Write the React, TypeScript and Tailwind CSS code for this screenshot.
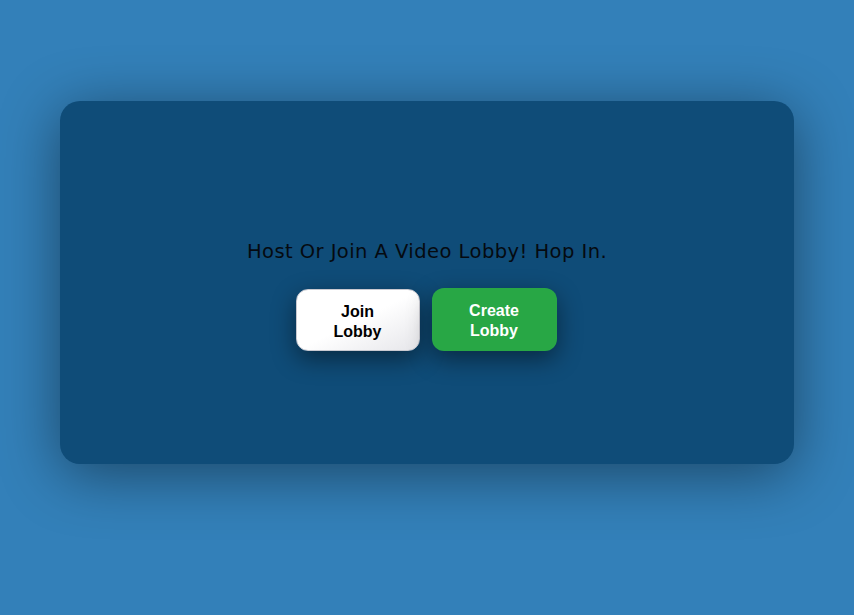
const App = () => {
  return (
    <div className="min-h-screen w-full bg-[#3380b9] pt-[101px] font-['Liberation_Sans',Arial,sans-serif]">
      <div className="mx-auto w-[734px] h-[363px] rounded-[20px] bg-[#0f4c78] shadow-[0_10px_60px_rgba(0,0,0,0.45)] flex flex-col items-center pt-[139px]">
        <h1 className="text-[19.5px] leading-6 text-[#050a10] tracking-[0.45px] font-['DejaVu_Sans',sans-serif]">
          Host Or Join A Video Lobby! Hop In.
        </h1>
        <div className="mt-[25px] flex gap-3 -ml-[2px]">
          <button className="w-[124px] h-[62px] pt-[3px] rounded-xl border border-[#c9c9d0] bg-gradient-to-br from-white from-50% to-[#e6e6ea] text-black font-bold text-base leading-5 shadow-[0_8px_24px_rgba(0,0,0,0.45)]">
            Join
            <br />
            Lobby
          </button>
          <button className="w-[125px] h-[63px] -mt-px pt-[2px] rounded-xl bg-[#28a745] text-white font-bold text-base leading-5 shadow-[0_8px_24px_rgba(0,0,0,0.45)]">
            Create
            <br />
            Lobby
          </button>
        </div>
      </div>
    </div>
  );
};

export default App;
